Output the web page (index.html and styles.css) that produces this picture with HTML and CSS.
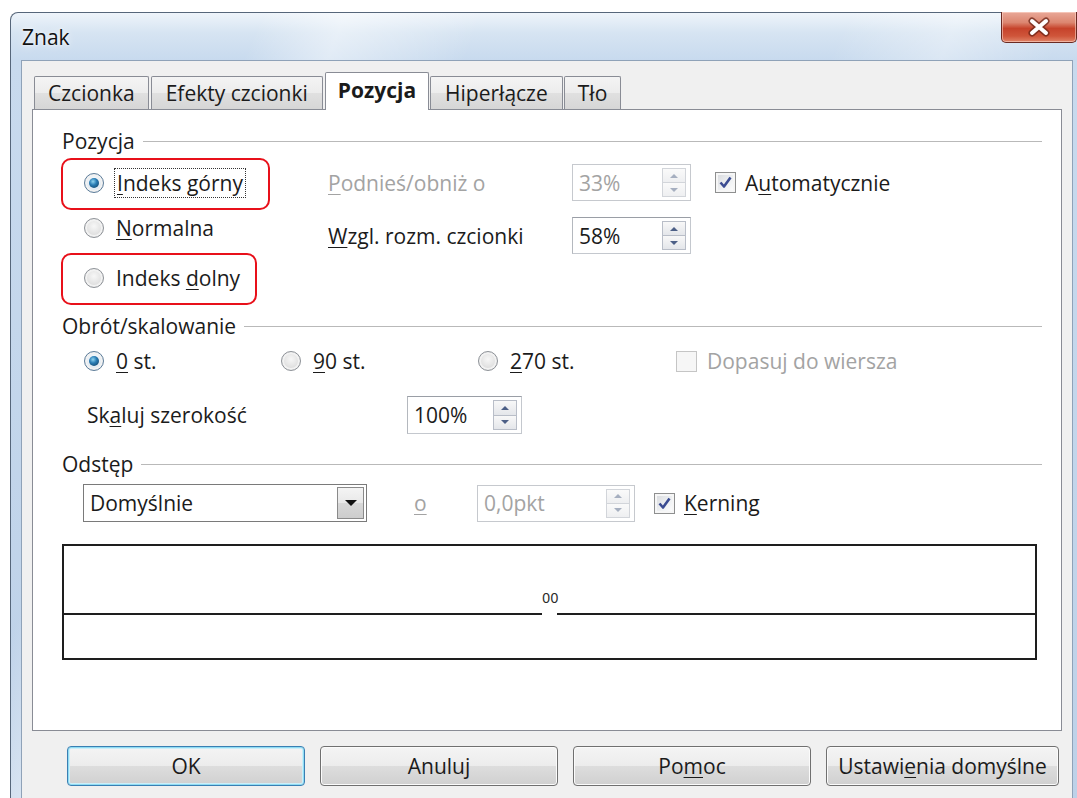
FILE: index.html
```html
<!DOCTYPE html>
<html lang="pl">
<head>
<meta charset="utf-8">
<title>Znak</title>
<link rel="stylesheet" href="styles.css">
</head>
<body>
<div class="window">
  <div class="titlebar">
    <span class="title">Znak</span>
    <div class="close-btn">
      <svg width="28" height="20" viewBox="0 0 28 20">
        <path d="M7 4 L21 16 M21 4 L7 16" stroke="#6b2417" stroke-width="7" stroke-linecap="round" fill="none" opacity="0.75"/>
        <path d="M7 4 L21 16 M21 4 L7 16" stroke="#ffffff" stroke-width="4" stroke-linecap="round" fill="none"/>
      </svg>
    </div>
  </div>

  <div class="client">
    <div class="tabs">
      <div class="tab tab-first">Czcionka</div>
      <div class="tab tab-wide">Efekty czcionki</div>
      <div class="tab tab-active">Pozycja</div>
      <div class="tab tab-mid">Hiperłącze</div>
      <div class="tab">Tło</div>
    </div>

    <div class="panel">
      <!-- Pozycja -->
      <div class="group-head"><span>Pozycja</span><i class="rule"></i></div>
      <div class="pos-body">
        <div class="opt-list">
          <div class="opt marked marked-a">
            <span class="radio on"></span>
            <span class="focus"><u>I</u>ndeks górny</span>
          </div>
          <div class="opt">
            <span class="radio"></span>
            <span class="opt-text"><u>N</u>ormalna</span>
          </div>
          <div class="opt marked marked-b">
            <span class="radio"></span>
            <span class="opt-text">Indeks <u>d</u>olny</span>
          </div>
        </div>
        <div class="pos-fields">
          <span class="field-label off"><u>P</u>odnieś/obniż o</span>
          <div class="spin off">
            <span class="spin-value">33%</span>
            <span class="spin-btns"><span class="spin-up"></span><span class="spin-down"></span></span>
          </div>
          <div class="check">
            <span class="checkbox on">
              <svg width="15" height="15" viewBox="0 0 15 15"><path d="M2.5 7.5 L6 11.5 L12.5 2.5" stroke="#3b4c92" stroke-width="2.6" fill="none" stroke-linejoin="round"/></svg>
            </span>
            <span>A<u>u</u>tomatycznie</span>
          </div>

          <span class="field-label"><u>W</u>zgl. rozm. czcionki</span>
          <div class="spin">
            <span class="spin-value">58%</span>
            <span class="spin-btns"><span class="spin-up"></span><span class="spin-down"></span></span>
          </div>
          <span></span>
        </div>
      </div>

      <!-- Obrót/skalowanie -->
      <div class="group-head group-gap"><span>Obrót/skalowanie</span><i class="rule"></i></div>
      <div class="rot-row">
        <div class="rot-opt"><span class="radio on"></span><span><u>0</u> st.</span></div>
        <div class="rot-opt"><span class="radio"></span><span><u>9</u>0 st.</span></div>
        <div class="rot-opt"><span class="radio"></span><span><u>2</u>70 st.</span></div>
        <div class="check off"><span class="checkbox"></span><span>Dopasuj do wiersza</span></div>
      </div>
      <div class="scale-row">
        <span class="scale-label">Sk<u>a</u>luj szerokość</span>
        <div class="spin spin-scale">
          <span class="spin-value">100%</span>
          <span class="spin-btns"><span class="spin-up"></span><span class="spin-down"></span></span>
        </div>
      </div>

      <!-- Odstęp -->
      <div class="group-head group-gap-2"><span>Odstęp</span><i class="rule"></i></div>
      <div class="space-row">
        <div class="combo">
          <span class="combo-value">Domyślnie</span>
          <span class="combo-btn"><span class="tri-down"></span></span>
        </div>
        <span class="by-label off"><u>o</u></span>
        <div class="spin off spin-pt">
          <span class="spin-value">0,0pkt</span>
          <span class="spin-btns"><span class="spin-up"></span><span class="spin-down"></span></span>
        </div>
        <div class="check">
          <span class="checkbox on">
            <svg width="15" height="15" viewBox="0 0 15 15"><path d="M2.5 7.5 L6 11.5 L12.5 2.5" stroke="#3b4c92" stroke-width="2.6" fill="none" stroke-linejoin="round"/></svg>
          </span>
          <span><u>K</u>erning</span>
        </div>
      </div>

      <div class="preview">
        <div class="preview-top"><span class="sample">00</span></div>
        <div class="baseline"><i></i><b></b><i></i></div>
      </div>
    </div>

    <div class="buttons">
      <div class="btn btn-default">OK</div>
      <div class="btn">Anuluj</div>
      <div class="btn">Po<u>m</u>oc</div>
      <div class="btn btn-reset">Ustawi<u>e</u>nia domyślne</div>
    </div>
  </div>
</div>
</body>
</html>
```

FILE: styles.css
```css
html, body {
  margin: 0;
  padding: 0;
  width: 1077px;
  height: 798px;
  overflow: hidden;
  background: #ffffff;
}

body {
  font-family: "Open Sans", "Noto Sans", "DejaVu Sans", sans-serif;
  font-size: 21px;
  line-height: 28px;
  color: #1b1b1b;
}

u {
  text-decoration: underline;
  text-decoration-thickness: 1px;
  text-underline-offset: 3px;
}

/* ---------- window frame ---------- */
.window {
  margin: 12px 0 0 10px;
  width: 1074px;
  height: 800px;
  box-sizing: border-box;
  padding: 0 10px;
  border: 1px solid #56667a;
  border-bottom: none;
  border-radius: 8px 8px 0 0;
  background:
    linear-gradient(112deg, rgba(255,255,255,0) 18%, rgba(255,255,255,0.45) 24%, rgba(255,255,255,0) 34%,
                            rgba(255,255,255,0) 60%, rgba(255,255,255,0.35) 68%, rgba(255,255,255,0) 76%),
    linear-gradient(to bottom, #eef4fa 0px, #d6e4f2 20px, #c8daee 47px, #bdd1e8 100%);
}

.titlebar {
  height: 47px;
  display: flex;
  justify-content: space-between;
  align-items: flex-start;
}

.title {
  margin: 10px 0 0 1px;
  color: #111;
  text-shadow: 0 0 8px rgba(255,255,255,0.9), 0 0 3px rgba(255,255,255,0.9);
}

.close-btn {
  margin: -1px -4px 0 0;
  width: 76px;
  height: 31px;
  box-sizing: border-box;
  border: 1px solid #6a2a22;
  border-top: none;
  border-radius: 0 0 5px 5px;
  background: linear-gradient(to bottom, #e9a898 0%, #dc8670 35%, #c6432b 55%, #cf553a 80%, #e08468 100%);
  box-shadow: inset 0 0 0 1px rgba(255,220,210,0.55);
  display: flex;
  align-items: center;
  justify-content: center;
}

/* ---------- client area ---------- */
.client {
  height: 760px;
  background: #f0f0f0;
  border: 1px solid #8fa2b8;
  border-bottom: none;
}

.tabs {
  display: flex;
  align-items: flex-end;
  height: 48px;
  padding-left: 12px;
}

.tab {
  height: 33px;
  box-sizing: border-box;
  padding: 0 13px;
  margin-right: 1px;
  border: 1px solid #898c95;
  border-bottom: none;
  border-radius: 2px 2px 0 0;
  background: linear-gradient(to bottom, #f4f4f4 0%, #ececec 50%, #e0e0e0 51%, #d6d6d6 100%);
  display: flex;
  align-items: center;
  white-space: nowrap;
}

.tab-first { padding: 0 13px; margin-right: 2px; }
.tab-wide { padding: 0 14px; margin-right: 2px; }
.tab-mid { padding: 0 14px; }

.tab-active {
  height: 38px;
  margin: 0 1px -1px 0;
  padding: 0 12px 4px;
  background: #ffffff;
  font-weight: 700;
  position: relative;
  z-index: 1;
}

.panel {
  margin-left: 10px;
  width: 1030px;
  height: 622px;
  box-sizing: border-box;
  border: 1px solid #898c95;
  background: #ffffff;
  padding: 17px 19px 0 29px;
}

/* ---------- group headings ---------- */
.group-head {
  display: flex;
  align-items: center;
  height: 28px;
}

.group-head .rule {
  flex: 1;
  height: 1px;
  margin-left: 8px;
  background: #b9b9b9;
}

.group-gap { margin-top: 7px; }
.group-gap-2 { margin-top: 16px; }

.off { color: #a3a3a3; }

/* ---------- radio buttons ---------- */
.radio {
  flex: none;
  width: 20px;
  height: 20px;
  box-sizing: border-box;
  border-radius: 50%;
  border: 1px solid #8e9298;
  background: radial-gradient(circle at 50% 40%, #f7f7f7 0%, #e6e6e6 45%, #cfcfcf 100%);
  box-shadow: inset 0 0 0 2px #f2f2f2;
  display: flex;
  align-items: center;
  justify-content: center;
}

.radio.on {
  border-color: #5d7c98;
  background: radial-gradient(circle at 50% 40%, #ffffff 0%, #dfe9f2 60%, #c2d3e2 100%);
}

.radio.on::after {
  content: "";
  width: 10px;
  height: 10px;
  border-radius: 50%;
  background: radial-gradient(circle at 40% 35%, #8fd4ef 0%, #2a7db5 40%, #0d3858 100%);
}

/* ---------- Pozycja body ---------- */
.pos-body {
  display: flex;
  align-items: flex-start;
  margin-top: 3px;
}

.opt-list {
  width: 267px;
  margin-left: -1px;
  display: flex;
  flex-direction: column;
}

.opt {
  display: flex;
  align-items: center;
  gap: 12px;
  height: 36px;
  box-sizing: border-box;
  padding-left: 23px;
}

.opt.marked {
  height: 52px;
  padding: 0 0 3px 21px;
  border: 2px solid #e8101a;
  border-radius: 10px;
}

.opt + .opt.marked { margin-top: 7px; }

.marked-a { width: 209px; gap: 10px; }
.marked-b { width: 196px; }

.focus {
  padding: 0 2px;
  border: 1px dotted #333;
}

.pos-fields {
  margin-top: 6px;
  display: grid;
  grid-template-columns: 244px 119px auto;
  grid-auto-rows: 37px;
  row-gap: 16px;
  align-items: center;
}

.field-label { white-space: nowrap; }

/* ---------- spin fields ---------- */
.spin {
  height: 37px;
  box-sizing: border-box;
  border: 1px solid #a2a6ae;
  border-color: #9a9ea6 #c4c8ce #c4c8ce #b4b8be;
  background: #ffffff;
  display: flex;
  padding: 3px 4px 3px 0;
}

.spin-value {
  flex: 1;
  display: flex;
  align-items: center;
  padding-left: 6px;
}

.spin-btns {
  width: 24px;
  display: flex;
  flex-direction: column;
}

.spin-up, .spin-down {
  flex: 1;
  border: 1px solid #b9bec8;
  background: linear-gradient(to bottom, #f8f8f8, #e4e6ea);
  display: flex;
  align-items: center;
  justify-content: center;
}

.spin-down { border-top: none; }

.spin-up::after, .spin-down::after {
  content: "";
  border-left: 4px solid transparent;
  border-right: 4px solid transparent;
}

.spin-up::after { border-bottom: 4px solid #4c5f86; }
.spin-down::after { border-top: 4px solid #4c5f86; }

.spin.off { border-color: #c6c9ce; }
.spin.off .spin-up, .spin.off .spin-down { border-color: #d2d5da; background: linear-gradient(to bottom, #fafafa, #eeeff1); }
.spin.off .spin-up::after { border-bottom-color: #a6afc0; }
.spin.off .spin-down::after { border-top-color: #a6afc0; }

/* ---------- check boxes ---------- */
.check {
  display: flex;
  align-items: center;
  gap: 9px;
  white-space: nowrap;
}

.pos-fields .check { margin-left: 24px; }

.checkbox {
  flex: none;
  width: 21px;
  height: 21px;
  box-sizing: border-box;
  border: 1px solid #8e8f8f;
  background: linear-gradient(135deg, #d6d8dc 0%, #eef0f2 55%, #ffffff 100%);
  box-shadow: inset 0 0 0 2px #f6f6f6;
  display: flex;
  align-items: center;
  justify-content: center;
}

.check.off { color: #a3a3a3; }
.check.off .checkbox {
  border-color: #c5c5c5;
  background: #f6f6f6;
  box-shadow: none;
}

/* ---------- rotation row ---------- */
.rot-row {
  display: flex;
  align-items: center;
  height: 36px;
  margin-top: 3px;
  padding-left: 22px;
}

.rot-opt {
  width: 197px;
  display: flex;
  align-items: center;
  gap: 12px;
}

.rot-row .check { margin-left: 1px; gap: 10px; }

.scale-row {
  display: flex;
  align-items: center;
  margin-top: 17px;
  padding-left: 25px;
}

.scale-label { width: 320px; }

.spin-scale { width: 115px; height: 38px; }

/* ---------- spacing row ---------- */
.space-row {
  display: flex;
  align-items: center;
  margin-top: 6px;
  padding-left: 21px;
}

.combo {
  width: 284px;
  height: 38px;
  box-sizing: border-box;
  border: 1px solid #7a7a7a;
  background: #ffffff;
  display: flex;
  padding: 2px;
}

.combo-value {
  flex: 1;
  display: flex;
  align-items: center;
  padding-left: 4px;
}

.combo-btn {
  width: 27px;
  box-sizing: border-box;
  border: 1px solid #8a8a8a;
  background: linear-gradient(to bottom, #f4f4f4 0%, #e8e8e8 50%, #d8d8d8 51%, #cdcdcd 100%);
  display: flex;
  align-items: center;
  justify-content: center;
}

.tri-down {
  border-left: 6px solid transparent;
  border-right: 6px solid transparent;
  border-top: 6px solid #111;
}

.by-label { margin-left: 47px; width: 63px; }

.spin-pt { width: 158px; }

.space-row > .check { margin-left: 19px; }

/* ---------- preview ---------- */
.preview {
  margin-top: 22px;
  width: 975px;
  height: 116px;
  box-sizing: border-box;
  border: 2px solid #1e1e1e;
  background: #ffffff;
}

.preview-top {
  height: 67px;
  display: flex;
  justify-content: center;
  align-items: flex-end;
}

.sample {
  font-family: "Liberation Sans", sans-serif;
  font-size: 14px;
  line-height: 14px;
  letter-spacing: 0.5px;
  color: #2a2a2a;
  margin: 0 0 8px 2px;
}

.baseline {
  display: flex;
  height: 2px;
}

.baseline i {
  flex: 1;
  background: #1e1e1e;
}

.baseline b {
  width: 15px;
}

/* ---------- dialog buttons ---------- */
.buttons {
  display: flex;
  gap: 15px;
  margin-top: 15px;
  padding-left: 45px;
}

.btn {
  width: 238px;
  height: 40px;
  box-sizing: border-box;
  border: 1px solid #707070;
  border-radius: 4px;
  background: linear-gradient(to bottom, #f4f4f4 0%, #ececec 50%, #dddddd 51%, #d0d0d0 100%);
  box-shadow: inset 0 0 0 1px #fbfbfb;
  display: flex;
  align-items: center;
  justify-content: center;
  white-space: nowrap;
}

.btn-default {
  border-color: #3a7fb3;
  box-shadow: inset 0 0 0 1px #8fdcf3, inset 0 0 0 2px #cdeef9;
}

.btn-reset { width: 233px; }
```
